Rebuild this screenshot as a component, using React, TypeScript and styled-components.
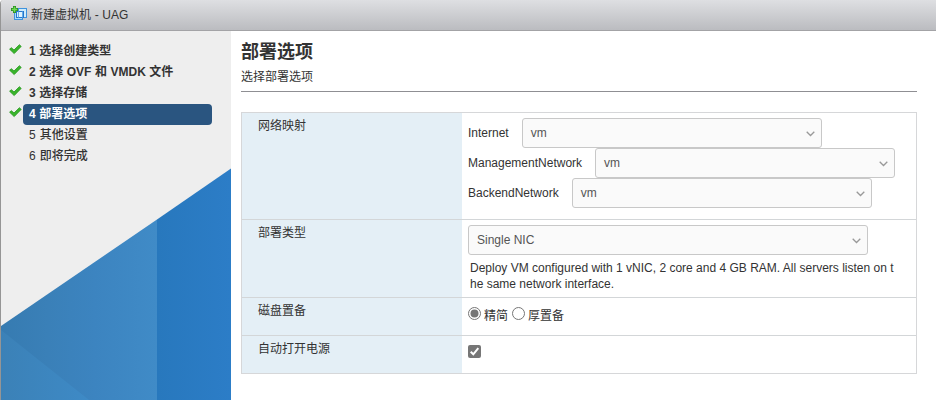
import React from 'react';
import styled, { createGlobalStyle, css } from 'styled-components';

const GlobalStyle = createGlobalStyle`
  * { box-sizing: border-box; }
  body {
    margin: 0;
    background: #fff;
    color: #333;
    font: 12px/16px "Liberation Sans", "Noto Sans CJK SC", sans-serif;
  }
`;

const Dialog = styled.div`
  display: flex;
  flex-direction: column;
  width: 936px;
  height: 400px;
  overflow: hidden;
  border-left: 1px solid #959595;
  border-top-left-radius: 4px;
`;

const TitleBar = styled.header`
  display: flex;
  align-items: flex-start;
  gap: 2px;
  flex: 0 0 31px;
  padding: 6px 0 0 10px;
  border-bottom: 1px solid #a3a3a6;
  background: linear-gradient(#dedfe2, #bbbcc0);
`;

const TitleText = styled.span`
  padding-top: 1px;
  line-height: 16px;
  word-spacing: 0.3px;
`;

const Body = styled.div`
  display: flex;
  flex: 1;
  min-height: 0;
`;

const Sidebar = styled.aside`
  display: flex;
  flex-direction: column;
  justify-content: space-between;
  width: 230px;
  background: #eee;
`;

const Steps = styled.ol`
  list-style: none;
  margin: 0;
  padding: 10px 19px 0 8px;
`;

const Step = styled.li`
  display: grid;
  grid-template-columns: 14px 1fr;
  height: 21px;
`;

const StepMark = styled.span`
  padding-top: 3px;
  line-height: 0;
`;

const StepLabel = styled.span<{ $active?: boolean; $bold?: boolean }>`
  padding-left: 6px;
  line-height: 21px;
  border-radius: 4px;
  font-weight: ${(p) => (p.$bold ? 700 : 500)};
  white-space: nowrap;
  word-spacing: ${(p) => (p.$bold ? 0.2 : 0.8)}px;
  ${(p) =>
    p.$active &&
    css`
      background: #2a5580;
      color: #fff;
    `}
`;

const Artwork = styled.svg`
  display: block;
  flex: none;
`;

const Main = styled.main`
  flex: 1;
  padding: 10px 19px 0 10px;
`;

const Heading = styled.h1`
  margin: 0;
  font-size: 18px;
  line-height: 22px;
`;

const Subheading = styled.p`
  height: 29px;
  margin: 0 0 20px;
  padding-top: 6px;
  border-bottom: 1px solid #8f8f93;
`;

const Table = styled.div`
  border: 1px solid #d6d7d9;
`;

const Row = styled.section<{ $height: number }>`
  display: grid;
  grid-template-columns: 220px 1fr;
  height: ${(p) => p.$height}px;
  & + & { border-top: 1px solid #d3d6d8; }
`;

const RowLabel = styled.div`
  padding: 5px 0 0 16px;
  background: #e4eff6;
`;

const Cell = styled.div<{ $top?: number }>`
  padding: ${(p) => p.$top ?? 5}px 0 0 6px;
`;

const Network = styled.label`
  display: flex;
  align-items: center;
  gap: 13px;
`;

const SelectBox = styled.div<{ $width: number }>`
  display: flex;
  align-items: center;
  justify-content: space-between;
  width: ${(p) => p.$width}px;
  height: 30px;
  padding: 0 6px 0 8px;
  border: 1px solid #c8c8c8;
  border-radius: 3px;
  background: #fafafa;
  color: #555;
`;

const Chevron = styled.svg`
  margin-top: 2px;
`;

const Description = styled.p`
  margin: 5px 0 0 2px;
  white-space: pre;
`;

const Choices = styled.div`
  display: flex;
  align-items: flex-start;
  gap: 4px;
`;

const Choice = styled.label`
  display: flex;
  align-items: flex-start;
  gap: 3px;
`;

const ChoiceText = styled.span`
  padding-top: 1px;
`;

const Control = styled.svg`
  display: block;
`;

function VmIcon() {
  return (
    <svg width="18" height="16" viewBox="0 0 18 16">
      <rect x="3.5" y="4.5" width="8" height="9" fill="#a9dbfa" stroke="#3f93dd" />
      <rect x="7.5" y="2.5" width="8" height="9" fill="#cdebfc" stroke="#3f93dd" />
      <rect x="5.5" y="5.5" width="7" height="6" fill="#e8f7ff" fillOpacity=".7" stroke="#2376cd" />
      <path d="M7.5 5.5v6M11.5 5.5v6" stroke="#68aee8" />
      <path d="M3.5 0v7M0 3.5h7" stroke="#2b8c22" strokeWidth="3" />
      <path d="M3.5.8v5.4M.8 3.5h5.4" stroke="#6fdb52" strokeWidth="1.6" />
    </svg>
  );
}

function CheckMark() {
  return (
    <svg width="13" height="12" viewBox="0 0 13 12">
      <path d="M.6 5.2 2.4 3.7 5 6 10.4.7 12.2 2.4 5.2 9.6Z" fill="#39b52b" stroke="#24951c" strokeWidth=".8" />
    </svg>
  );
}

function Select({ value, width = 300 }: { value: string; width?: number }) {
  return (
    <SelectBox $width={width}>
      <span>{value}</span>
      <Chevron width="9" height="6" viewBox="0 0 9 6">
        <path d="M.7.8 4.5 4.5 8.3.8" fill="none" stroke="#999" strokeWidth="1.3" />
      </Chevron>
    </SelectBox>
  );
}

function Radio({ checked }: { checked?: boolean }) {
  return (
    <Control width="13" height="13" viewBox="0 0 13 13">
      <circle cx="6.5" cy="6.5" r="6" fill="#fff" stroke="#767676" />
      {checked && <circle cx="6.5" cy="6.5" r="4" fill="#767676" />}
    </Control>
  );
}

const steps = [
  { text: '1 选择创建类型', done: true },
  { text: '2 选择 OVF 和 VMDK 文件', done: true },
  { text: '3 选择存储', done: true },
  { text: '4 部署选项', done: true, active: true },
  { text: '5 其他设置' },
  { text: '6 即将完成' },
];

const networks = ['Internet', 'ManagementNetwork', 'BackendNetwork'];

export default function App() {
  return (
    <>
      <GlobalStyle />
      <Dialog>
        <TitleBar>
          <VmIcon />
          <TitleText>新建虚拟机 - UAG</TitleText>
        </TitleBar>
        <Body>
          <Sidebar>
            <Steps>
              {steps.map((s) => (
                <Step key={s.text}>
                  <StepMark>{s.done && <CheckMark />}</StepMark>
                  <StepLabel $active={s.active} $bold={s.done}>{s.text}</StepLabel>
                </Step>
              ))}
            </Steps>
            <Artwork width="230" height="232" viewBox="0 0 230 232">
              <defs>
                <linearGradient id="slope">
                  <stop stopColor="#367bb1" />
                  <stop offset=".3" stopColor="#3a80b8" />
                  <stop offset=".6" stopColor="#3c84c0" />
                  <stop offset="1" stopColor="#408bc7" />
                </linearGradient>
                <linearGradient id="corner">
                  <stop stopColor="#3b81b7" />
                  <stop offset="1" stopColor="#3e8ac6" />
                </linearGradient>
                <linearGradient id="panel">
                  <stop stopColor="#2878bd" />
                  <stop offset="1" stopColor="#2c7dc7" />
                </linearGradient>
              </defs>
              <path d="M0 158 156 51.5V232H0Z" fill="url(#slope)" />
              <path d="M0 162 88 232H0Z" fill="url(#corner)" />
              <path d="M156 51.5 230 .5V232H156Z" fill="url(#panel)" />
            </Artwork>
          </Sidebar>
          <Main>
            <Heading>部署选项</Heading>
            <Subheading>选择部署选项</Subheading>
            <Table>
              <Row $height={106}>
                <RowLabel>网络映射</RowLabel>
                <Cell>
                  {networks.map((name) => (
                    <Network key={name}>
                      <span>{name}</span>
                      <Select value="vm" />
                    </Network>
                  ))}
                </Cell>
              </Row>
              <Row $height={78}>
                <RowLabel>部署类型</RowLabel>
                <Cell>
                  <Select value="Single NIC" width={400} />
                  <Description>
                    {'Deploy VM configured with 1 vNIC, 2 core and 4 GB RAM. All servers listen on t\nhe same network interface.'}
                  </Description>
                </Cell>
              </Row>
              <Row $height={38}>
                <RowLabel>磁盘置备</RowLabel>
                <Cell $top={9}>
                  <Choices>
                    <Choice><Radio checked /><ChoiceText>精简</ChoiceText></Choice>
                    <Choice><Radio /><ChoiceText>厚置备</ChoiceText></Choice>
                  </Choices>
                </Cell>
              </Row>
              <Row $height={38}>
                <RowLabel>自动打开电源</RowLabel>
                <Cell $top={9}>
                  <Control width="13" height="13" viewBox="0 0 13 13">
                    <rect width="13" height="13" rx="2" fill="#767676" />
                    <path d="m2.7 6.7 2.6 2.6 5-6.2" fill="none" stroke="#fff" strokeWidth="2" />
                  </Control>
                </Cell>
              </Row>
            </Table>
          </Main>
        </Body>
      </Dialog>
    </>
  );
}
